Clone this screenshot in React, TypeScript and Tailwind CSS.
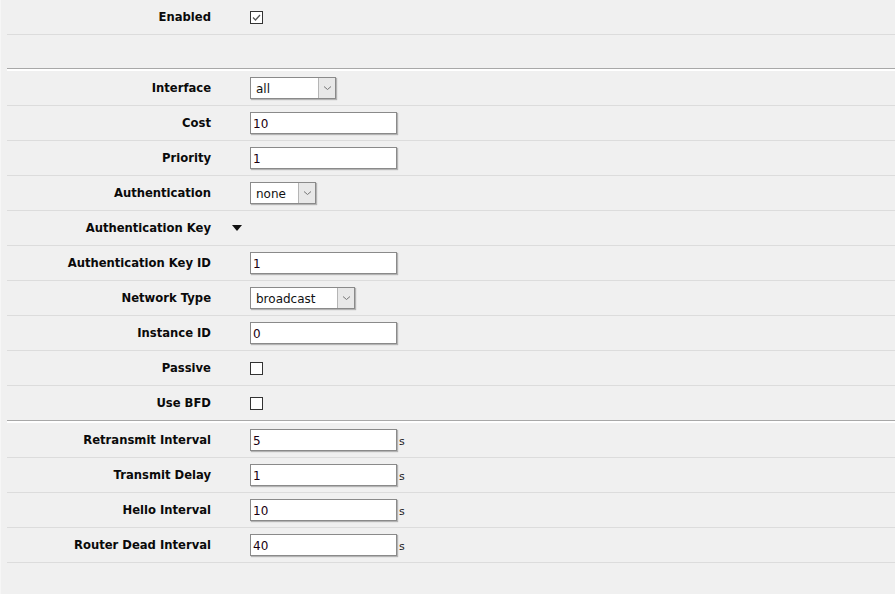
import React from "react";

const labelCls =
  "w-[204px] shrink-0 text-right font-bold text-[11.6px] text-[#0a0a0a] pt-[2px]";

function Row({ label, children }: { label: string; children?: React.ReactNode }) {
  return (
    <div className="flex h-[35px] items-center border-b border-[#dcdcdc]">
      <div className={labelCls}>{label}</div>
      <div className="ml-[39px] flex items-center">{children}</div>
    </div>
  );
}

function TextInput({ value, unit }: { value: string; unit?: boolean }) {
  return (
    <div className="flex items-center">
      <div className="flex h-[22px] w-[147px] items-center border border-[#8a8a8a] bg-white pl-[2px] pt-[1px] text-[12px] text-[#1a0010] shadow-[1px_1px_1px_rgba(0,0,0,0.25)]">
        {value}
      </div>
      {unit && <span className="ml-[2px] mt-[5px] text-[11px] text-[#222]">s</span>}
    </div>
  );
}

function Select({ value, width }: { value: string; width: number }) {
  return (
    <div
      className="flex h-[22px] items-stretch border border-[#8a8a8a] bg-white shadow-[1px_1px_1px_rgba(0,0,0,0.25)]"
      style={{ width }}
    >
      <div className="flex flex-1 items-center pl-[5px] pt-[1px] text-[12px] text-[#111]">{value}</div>
      <div className="flex w-[17px] items-center justify-center border-l border-[#b5b5b5] bg-[#e8e8e8]">
        <svg width="9" height="6" viewBox="0 0 9 6">
          <path d="M1 1.5 L4.5 4.5 L8 1.5" fill="none" stroke="#777" strokeWidth="1" />
        </svg>
      </div>
    </div>
  );
}

function Checkbox({ checked }: { checked?: boolean }) {
  return (
    <div className="flex h-[13px] w-[13px] items-center justify-center border border-[#333] bg-white">
      {checked && (
        <svg width="11" height="11" viewBox="0 0 11 11">
          <path d="M2 5.5 L4.5 8 L9 3" fill="none" stroke="#555" strokeWidth="1.3" />
        </svg>
      )}
    </div>
  );
}

function Sep() {
  return (
    <div>
      <div className="h-[1px] bg-[#a8a8a8]" />
      <div className="h-[2px] bg-white" />
    </div>
  );
}

export default function App() {
  return (
    <div
      className="min-h-[594px] w-[895px] bg-[#f0f0f0] border-l border-[#f6f6f6] pl-[6px]"
      style={{ fontFamily: '"DejaVu Sans", Verdana, sans-serif' }}
    >
      <div className="flex h-[35px] items-center border-b border-[#dcdcdc]">
        <div className={labelCls}>Enabled</div>
        <div className="ml-[39px] flex items-center">
          <Checkbox checked />
        </div>
      </div>
      <div className="h-[33px]" />
      <Sep />
      <Row label="Interface">
        <Select value="all" width={86} />
      </Row>
      <Row label="Cost">
        <TextInput value="10" />
      </Row>
      <Row label="Priority">
        <TextInput value="1" />
      </Row>
      <Row label="Authentication">
        <Select value="none" width={66} />
      </Row>
      <div className="flex h-[35px] items-center border-b border-[#dcdcdc]">
        <div className={labelCls}>Authentication Key</div>
        <div className="ml-[21px] flex items-center">
          <svg width="10" height="6" viewBox="0 0 10 6">
            <path d="M0 0 L10 0 L5 6 Z" fill="#111" />
          </svg>
        </div>
      </div>
      <Row label="Authentication Key ID">
        <TextInput value="1" />
      </Row>
      <Row label="Network Type">
        <Select value="broadcast" width={105} />
      </Row>
      <Row label="Instance ID">
        <TextInput value="0" />
      </Row>
      <Row label="Passive">
        <Checkbox />
      </Row>
      <div className="flex h-[34px] items-center">
        <div className={labelCls}>Use BFD</div>
        <div className="ml-[39px] flex items-center">
          <Checkbox />
        </div>
      </div>
      <Sep />
      <Row label="Retransmit Interval">
        <TextInput value="5" unit />
      </Row>
      <Row label="Transmit Delay">
        <TextInput value="1" unit />
      </Row>
      <Row label="Hello Interval">
        <TextInput value="10" unit />
      </Row>
      <Row label="Router Dead Interval">
        <TextInput value="40" unit />
      </Row>
    </div>
  );
}
